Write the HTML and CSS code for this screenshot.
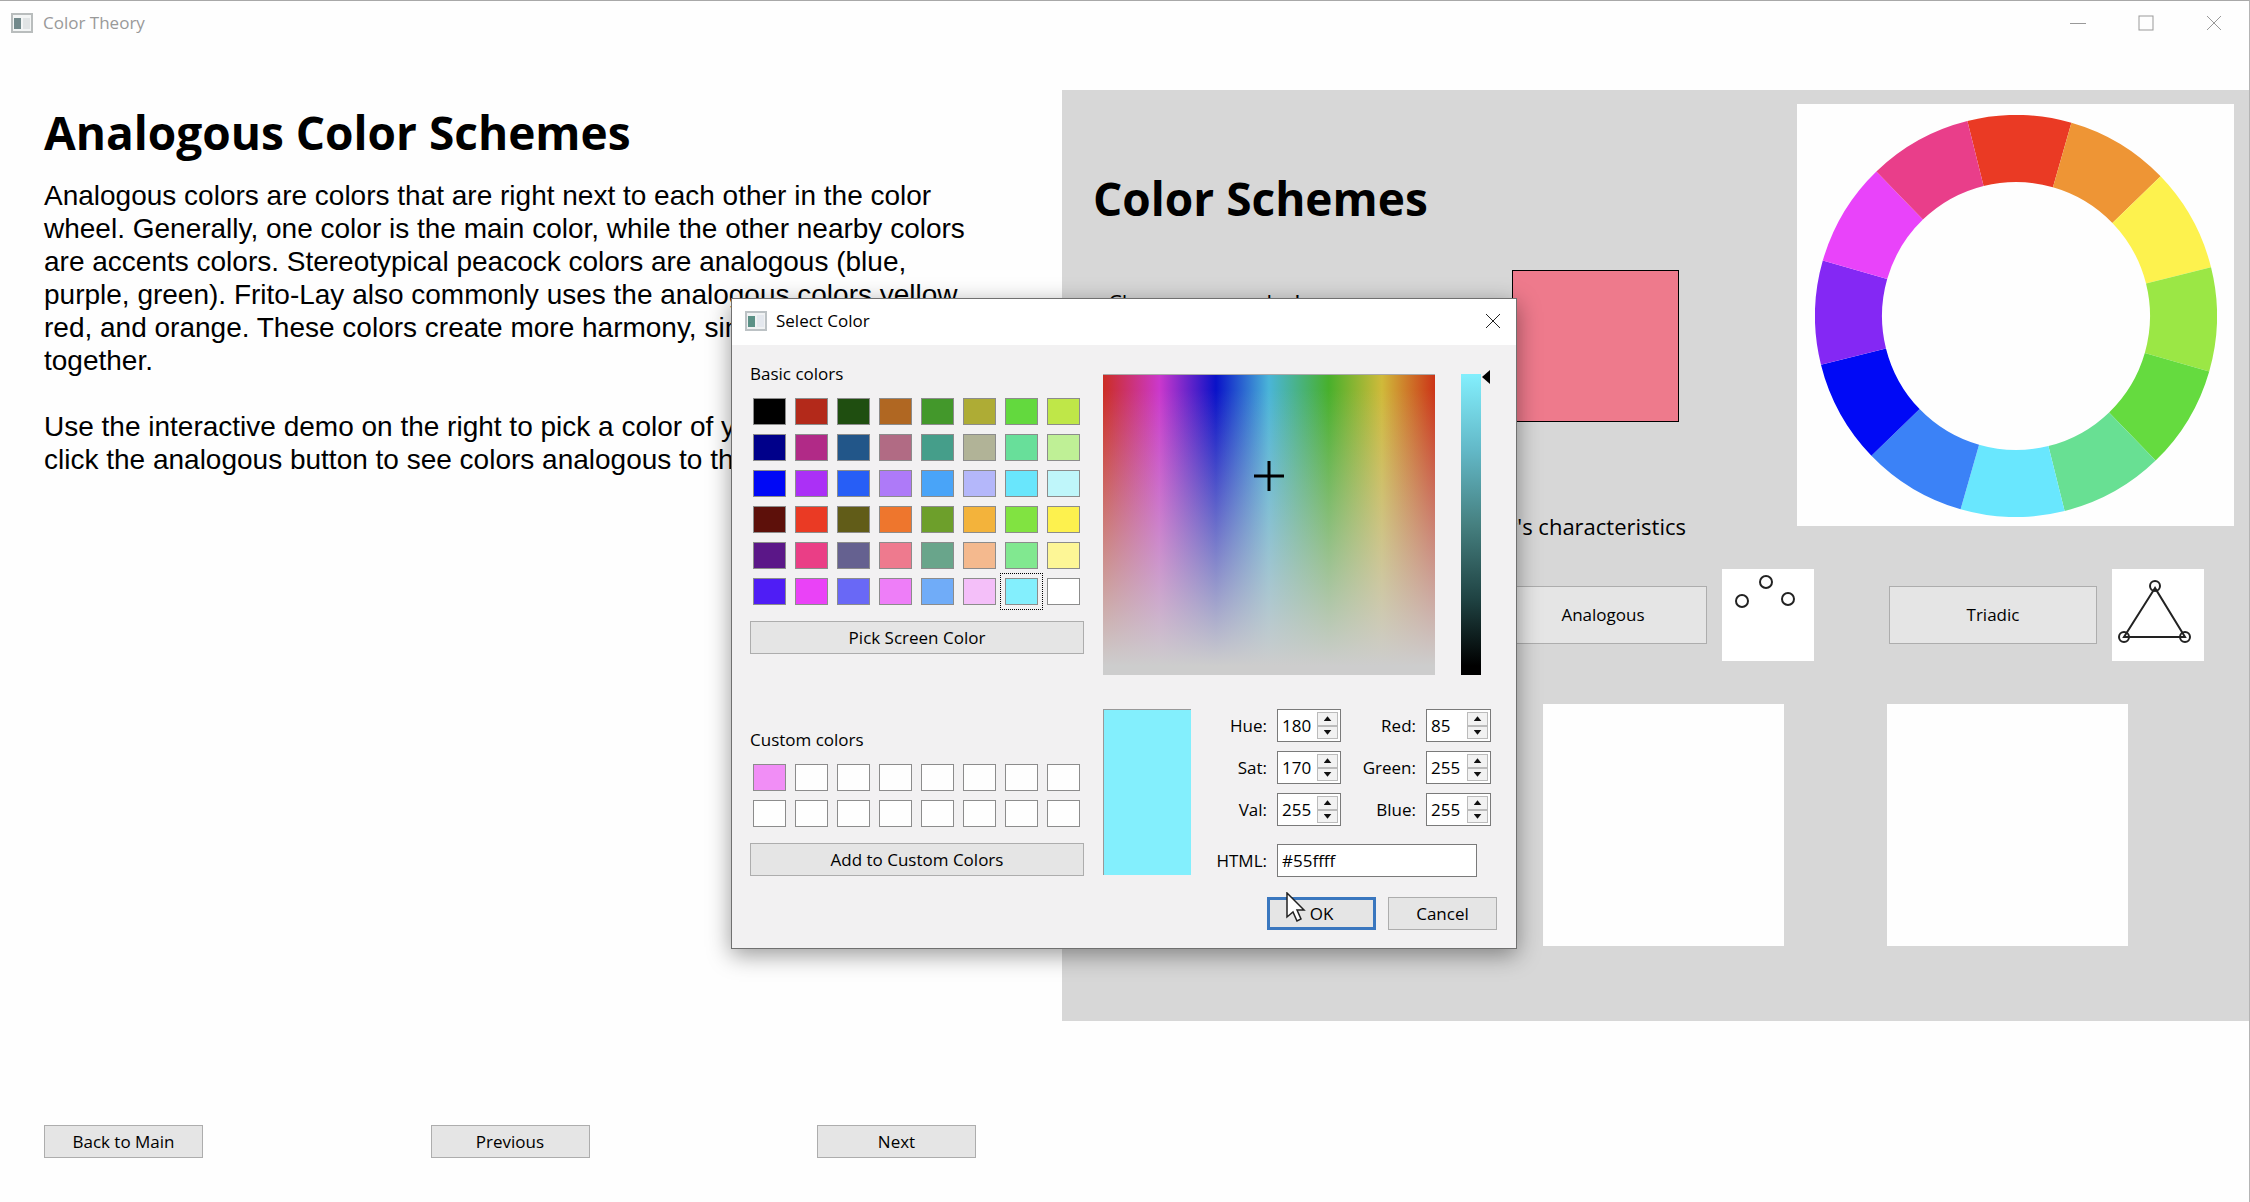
FILE: index.html
```html
<!DOCTYPE html>
<html lang="en">
<head>
<meta charset="utf-8">
<title>Color Theory</title>
<link rel="stylesheet" href="styles.css">
</head>
<body>
<div class="window">
  <header class="titlebar">
    <svg class="app-icon" viewBox="0 0 22 20"><rect x="1" y="1" width="20" height="18" fill="#f3f5f5" stroke="#b9bdbd" stroke-width="2"/><rect x="3" y="5" width="7" height="11" fill="#72898b"/><rect x="12" y="5" width="7" height="11" fill="#e1e4e5"/></svg>
    <span class="titlebar-text">Color Theory</span>
    <div class="window-controls">
      <button type="button" aria-label="Minimize"><svg viewBox="0 0 16 16"><path d="M0 8.500H16"/></svg></button>
      <button type="button" aria-label="Maximize"><svg viewBox="0 0 16 16"><rect x="1" y="1" width="14" height="14"/></svg></button>
      <button type="button" aria-label="Close"><svg viewBox="0 0 16 16"><path d="M1 1L15 15M15 1L1 15"/></svg></button>
    </div>
  </header>

  <main class="content">
    <section class="lesson">
      <div>
        <h1>Analogous Color Schemes</h1>
        <p>Analogous colors are colors that are right next to each other in the color wheel. Generally, one color is the main color, while the other nearby colors are accents colors. Stereotypical peacock colors are analogous (blue, purple, green). Frito-Lay also commonly uses the analogous colors yellow, red, and orange. These colors create more harmony, since they are close together.</p>
        <p>Use the interactive demo on the right to pick a color of your choice. Then click the analogous button to see colors analogous to that color.</p>
      </div>
      <nav class="lesson-nav">
        <button type="button" class="btn">Back to Main</button>
        <button type="button" class="btn">Previous</button>
        <button type="button" class="btn">Next</button>
      </nav>
    </section>

    <section class="demo">
      <div class="demo-top">
        <div class="demo-intro">
          <h2>Color Schemes</h2>
          <div class="choose-row">
            <span class="choose-label">Choose your color!</span>
            <button type="button" class="chosen-color" aria-label="Chosen color"></button>
          </div>
          <p class="characteristics">Pick your color's characteristics</p>
        </div>
        <div class="wheel-card">
          <svg class="wheel" viewBox="-201 -201 402 402" role="img" aria-label="Color wheel">
            <g fill="none" stroke-width="67" transform="rotate(-14)">
              <path stroke="#ea3a24" d="M0-167.500A167.500 167.500 0 0 1 83.750-145.060"/>
              <path stroke="#ee9535" transform="rotate(30)" d="M0-167.500A167.500 167.500 0 0 1 83.750-145.060"/>
              <path stroke="#fdf24e" transform="rotate(60)" d="M0-167.500A167.500 167.500 0 0 1 83.750-145.060"/>
              <path stroke="#9be745" transform="rotate(90)" d="M0-167.500A167.500 167.500 0 0 1 83.750-145.060"/>
              <path stroke="#65db3f" transform="rotate(120)" d="M0-167.500A167.500 167.500 0 0 1 83.750-145.060"/>
              <path stroke="#68e093" transform="rotate(150)" d="M0-167.500A167.500 167.500 0 0 1 83.750-145.060"/>
              <path stroke="#69e7fe" transform="rotate(180)" d="M0-167.500A167.500 167.500 0 0 1 83.750-145.060"/>
              <path stroke="#3b82f7" transform="rotate(210)" d="M0-167.500A167.500 167.500 0 0 1 83.750-145.060"/>
              <path stroke="#0009f6" transform="rotate(240)" d="M0-167.500A167.500 167.500 0 0 1 83.750-145.060"/>
              <path stroke="#8428f4" transform="rotate(270)" d="M0-167.500A167.500 167.500 0 0 1 83.750-145.060"/>
              <path stroke="#e943fa" transform="rotate(300)" d="M0-167.500A167.500 167.500 0 0 1 83.750-145.060"/>
              <path stroke="#e93e8a" transform="rotate(330)" d="M0-167.500A167.500 167.500 0 0 1 83.750-145.060"/>
            </g>
          </svg>
        </div>
      </div>

      <div class="schemes">
        <div class="scheme">
          <button type="button" class="btn btn-scheme">Analogous</button>
          <svg class="scheme-icon" viewBox="0 0 92 92"><g fill="none" stroke="#222" stroke-width="2"><circle cx="44" cy="13" r="6"/><circle cx="20" cy="32" r="6"/><circle cx="66" cy="30" r="6"/></g></svg>
        </div>
        <div class="scheme">
          <button type="button" class="btn btn-scheme">Triadic</button>
          <svg class="scheme-icon" viewBox="0 0 92 92"><g fill="none" stroke="#222" stroke-width="2"><circle cx="43" cy="17" r="5"/><circle cx="12" cy="68" r="5"/><circle cx="73" cy="68" r="5"/><path d="M43 19L12 68H73Z"/></g></svg>
        </div>
      </div>

      <div class="results">
        <div class="result"></div>
        <div class="result"></div>
      </div>
    </section>
  </main>

  <div class="dialog" role="dialog" aria-labelledby="dialog-title">
    <div class="dialog-bar">
      <svg class="app-icon" viewBox="0 0 22 20"><rect x="1" y="1" width="20" height="18" fill="#f0f2f3" stroke="#bcc2c5" stroke-width="2"/><rect x="3" y="5" width="7" height="11" fill="#5b9186"/><rect x="12" y="4" width="7" height="12" fill="#e4e8ee"/></svg>
      <span id="dialog-title">Select Color</span>
      <button type="button" class="dialog-close" aria-label="Close"><svg viewBox="0 0 16 16"><path d="M1 1L15 15M15 1L1 15"/></svg></button>
    </div>
    <form class="dialog-body">
      <div class="palette">
        <h3>Basic colors</h3>
        <div class="swatches">
          <button type="button" aria-label="Color 1" style="background:#000000"></button>
          <button type="button" aria-label="Color 2" style="background:#b3291a"></button>
          <button type="button" aria-label="Color 3" style="background:#1f4e10"></button>
          <button type="button" aria-label="Color 4" style="background:#b06722"></button>
          <button type="button" aria-label="Color 5" style="background:#43982b"></button>
          <button type="button" aria-label="Color 6" style="background:#aeac35"></button>
          <button type="button" aria-label="Color 7" style="background:#63d93e"></button>
          <button type="button" aria-label="Color 8" style="background:#bfe748"></button>
          <button type="button" aria-label="Color 9" style="background:#00008a"></button>
          <button type="button" aria-label="Color 10" style="background:#b12a87"></button>
          <button type="button" aria-label="Color 11" style="background:#225689"></button>
          <button type="button" aria-label="Color 12" style="background:#b16b84"></button>
          <button type="button" aria-label="Color 13" style="background:#459e8a"></button>
          <button type="button" aria-label="Color 14" style="background:#b1b397"></button>
          <button type="button" aria-label="Color 15" style="background:#68df9a"></button>
          <button type="button" aria-label="Color 16" style="background:#bff096"></button>
          <button type="button" aria-label="Color 17" style="background:#0008f6"></button>
          <button type="button" aria-label="Color 18" style="background:#ab30f6"></button>
          <button type="button" aria-label="Color 19" style="background:#275ef6"></button>
          <button type="button" aria-label="Color 20" style="background:#ae7af8"></button>
          <button type="button" aria-label="Color 21" style="background:#49a4f8"></button>
          <button type="button" aria-label="Color 22" style="background:#b4b7fa"></button>
          <button type="button" aria-label="Color 23" style="background:#69e6fc"></button>
          <button type="button" aria-label="Color 24" style="background:#bff6fa"></button>
          <button type="button" aria-label="Color 25" style="background:#5d100a"></button>
          <button type="button" aria-label="Color 26" style="background:#ea3a24"></button>
          <button type="button" aria-label="Color 27" style="background:#615c18"></button>
          <button type="button" aria-label="Color 28" style="background:#ee762d"></button>
          <button type="button" aria-label="Color 29" style="background:#6d9f2b"></button>
          <button type="button" aria-label="Color 30" style="background:#f3b33b"></button>
          <button type="button" aria-label="Color 31" style="background:#81e341"></button>
          <button type="button" aria-label="Color 32" style="background:#fdf14e"></button>
          <button type="button" aria-label="Color 33" style="background:#5b1788"></button>
          <button type="button" aria-label="Color 34" style="background:#ea3e86"></button>
          <button type="button" aria-label="Color 35" style="background:#656190"></button>
          <button type="button" aria-label="Color 36" style="background:#ee7a8e"></button>
          <button type="button" aria-label="Color 37" style="background:#69a58b"></button>
          <button type="button" aria-label="Color 38" style="background:#f4b98e"></button>
          <button type="button" aria-label="Color 39" style="background:#81e890"></button>
          <button type="button" aria-label="Color 40" style="background:#fdf696"></button>
          <button type="button" aria-label="Color 41" style="background:#4f1df5"></button>
          <button type="button" aria-label="Color 42" style="background:#ea42f7"></button>
          <button type="button" aria-label="Color 43" style="background:#6968f6"></button>
          <button type="button" aria-label="Color 44" style="background:#ee7ef8"></button>
          <button type="button" aria-label="Color 45" style="background:#70acf8"></button>
          <button type="button" aria-label="Color 46" style="background:#f4bff9"></button>
          <button type="button" aria-label="Color 47" class="selected" style="background:#83effd"></button>
          <button type="button" aria-label="Color 48" style="background:#ffffff"></button>
        </div>
        <button type="button" class="btn">Pick Screen Color</button>
        <h3 class="custom-title">Custom colors</h3>
        <div class="swatches">
          <button type="button" aria-label="Custom 1" style="background:#f18ef6"></button>
          <button type="button" aria-label="Custom 2"></button>
          <button type="button" aria-label="Custom 3"></button>
          <button type="button" aria-label="Custom 4"></button>
          <button type="button" aria-label="Custom 5"></button>
          <button type="button" aria-label="Custom 6"></button>
          <button type="button" aria-label="Custom 7"></button>
          <button type="button" aria-label="Custom 8"></button>
          <button type="button" aria-label="Custom 9"></button>
          <button type="button" aria-label="Custom 10"></button>
          <button type="button" aria-label="Custom 11"></button>
          <button type="button" aria-label="Custom 12"></button>
          <button type="button" aria-label="Custom 13"></button>
          <button type="button" aria-label="Custom 14"></button>
          <button type="button" aria-label="Custom 15"></button>
          <button type="button" aria-label="Custom 16"></button>
        </div>
        <button type="button" class="btn">Add to Custom Colors</button>
      </div>

      <div class="picker">
        <div class="picker-top">
          <div class="spectrum"><svg class="crosshair" viewBox="0 0 30 30"><path d="M15 0V30M0 15H30" stroke="#000" stroke-width="3"/></svg></div>
          <div class="value-bar"></div>
          <svg class="value-arrow" viewBox="0 0 8 14"><path d="M8 0V14L0 7Z"/></svg>
        </div>
        <div class="picker-values">
          <div class="preview"></div>
          <div class="fields">
            <label for="hue">Hue:</label>
            <div class="spin"><input id="hue" type="number" value="180"><span class="spin-buttons"><button type="button" aria-label="Increase hue"></button><button type="button" class="down" aria-label="Decrease hue"></button></span></div>
            <label for="red">Red:</label>
            <div class="spin"><input id="red" type="number" value="85"><span class="spin-buttons"><button type="button" aria-label="Increase red"></button><button type="button" class="down" aria-label="Decrease red"></button></span></div>
            <label for="sat">Sat:</label>
            <div class="spin"><input id="sat" type="number" value="170"><span class="spin-buttons"><button type="button" aria-label="Increase saturation"></button><button type="button" class="down" aria-label="Decrease saturation"></button></span></div>
            <label for="green">Green:</label>
            <div class="spin"><input id="green" type="number" value="255"><span class="spin-buttons"><button type="button" aria-label="Increase green"></button><button type="button" class="down" aria-label="Decrease green"></button></span></div>
            <label for="val">Val:</label>
            <div class="spin"><input id="val" type="number" value="255"><span class="spin-buttons"><button type="button" aria-label="Increase value"></button><button type="button" class="down" aria-label="Decrease value"></button></span></div>
            <label for="blue">Blue:</label>
            <div class="spin"><input id="blue" type="number" value="255"><span class="spin-buttons"><button type="button" aria-label="Increase blue"></button><button type="button" class="down" aria-label="Decrease blue"></button></span></div>
            <label for="html" class="html-label">HTML:</label>
            <input id="html" class="html-input" type="text" value="#55ffff">
          </div>
        </div>
        <div class="actions">
          <button type="button" class="btn btn-default">OK<svg class="pointer" viewBox="0 0 20 30"><path d="M1 1V25L7 20L11 29L15 27L11 18H18Z" fill="#fff" stroke="#222" stroke-width="1.500"/></svg></button>
          <button type="button" class="btn">Cancel</button>
        </div>
      </div>
    </form>
  </div>
</div>
</body>
</html>
```
FILE: styles.css
```css
* { box-sizing: border-box; }

body {
  margin: 0;
  background: #fefefe;
  color: #000;
  font-family: "Open Sans", "Noto Sans", sans-serif;
  font-size: 17px;
  line-height: 24px;
}

button, input { font: inherit; color: inherit; }
h1, h2, h3, p { margin: 0; }
svg { display: block; }

.window {
  position: relative;
  display: flex;
  flex-direction: column;
  min-height: 100vh;
  border-top: 1px solid #a8a8a8;
  border-right: 1px solid #b4b4b4;
}

.titlebar {
  display: flex;
  align-items: center;
  gap: 10px;
  height: 44px;
  padding: 0 0 0 11px;
  color: #999;
}

.app-icon { width: 22px; height: 20px; flex: none; }

.window-controls { display: flex; margin-left: auto; padding-right: 1px; }
.window-controls button {
  display: grid;
  place-items: center;
  width: 68px;
  height: 44px;
  padding: 0;
  border: 0;
  background: none;
}
.window-controls svg, .dialog-close svg {
  width: 16px;
  height: 16px;
  fill: none;
  stroke: #999;
  stroke-width: 1;
}

.content {
  flex: 1;
  display: grid;
  grid-template-columns: 1062fr 1187fr;
  align-items: start;
  padding-top: 45px;
}

.lesson {
  align-self: stretch;
  display: flex;
  flex-direction: column;
  justify-content: space-between;
  padding: 10px 86px 44px 44px;
}

h1, h2 { font-size: 46px; line-height: 64px; font-weight: 700; }

.lesson p {
  margin: 15px 0 33px;
  font-family: "Liberation Sans", Arial, sans-serif;
  font-size: 28px;
  line-height: 33px;
}

.lesson p + p { margin: 0; }

.lesson-nav { display: flex; justify-content: space-between; }
.lesson-nav .btn { width: 159px; }

.btn {
  height: 33px;
  padding: 0;
  border: 1px solid #adadad;
  background: #e5e5e5;
}

.demo {
  padding: 14px 15px 75px 31px;
  background: #d7d7d7;
}

.demo-top { display: flex; height: 465px; }
.demo-intro { flex: 1; padding-top: 62px; }
.choose-row {
  display: flex;
  justify-content: space-between;
  padding: 40px 118px 0 15px;
}
.choose-label, .characteristics { font-size: 22px; line-height: 32px; }
.choose-label { padding-top: 16px; }
.chosen-color {
  width: 167px;
  height: 152px;
  padding: 0;
  border: 1px solid #000;
  background: #ee7a8c;
}
.characteristics { padding: 88px 111px 0 0; text-align: right; }

.wheel-card {
  display: flex;
  justify-content: center;
  width: 437px;
  height: 422px;
  padding-top: 11px;
  background: #fefefe;
}
.wheel { width: 402px; height: 402px; }

.schemes { display: flex; justify-content: flex-end; gap: 75px; padding-right: 30px; }
.scheme { display: flex; align-items: center; gap: 15px; }
.btn-scheme { width: 208px; height: 58px; }
.scheme-icon { width: 92px; height: 92px; background: #fff; }

.results { display: flex; justify-content: flex-end; gap: 103px; padding: 43px 106px 0 0; }
.result { width: 241px; height: 242px; background: #fefefe; }

.dialog {
  position: absolute;
  left: 731px;
  top: 297px;
  width: 786px;
  border: 1px solid #707070;
  background: #f2f1f2;
  box-shadow: 0 6px 22px rgba(0, 0, 0, 0.4);
}

.dialog-bar {
  display: flex;
  align-items: center;
  gap: 9px;
  height: 46px;
  padding: 0 15px 2px 13px;
  background: #fff;
}
.dialog-close { margin-left: auto; padding: 0; border: 0; background: none; }
.dialog-close svg { stroke: #222; }

.dialog-body { display: flex; gap: 19px; padding: 17px 19px 18px 18px; }

.palette { width: 334px; display: flex; flex-direction: column; }
h3 { font-size: 17px; line-height: 24px; font-weight: 400; }

.swatches {
  display: grid;
  grid-template-columns: repeat(8, 33px);
  gap: 9px;
  padding: 12px 3px 16px;
}
.swatches button {
  height: 27px;
  padding: 0;
  border: 1px solid #8c8c8c;
  background: #fefefe;
}
.swatches .selected { outline: 1px dotted #000; outline-offset: 4px; }
.custom-title { margin-top: 74px; }

.picker { flex: 1; display: flex; flex-direction: column; }
.picker-top { display: flex; padding-top: 12px; }
.spectrum {
  display: grid;
  place-items: start center;
  width: 332px;
  height: 301px;
  padding-top: 86px;
  border-top: 1px solid #aaa;
  background:
    linear-gradient(to bottom, transparent 0 5%, #cdcdcd 97%),
    linear-gradient(to right, #cc2e24, #cb38cc 17%, #0a12c8 34%, #4ab5d8 50%, #48b02c 68%, #d0ba3a 84%, #cc3418);
}
.crosshair { width: 30px; height: 30px; }
.value-bar {
  width: 20px;
  height: 301px;
  margin-left: 26px;
  background: linear-gradient(to bottom, #83effd, #63b9c8 25%, #468080 50%, #1f4242 75%, #000 97%);
}
.value-arrow { width: 8px; height: 14px; margin: -4px 0 0 1px; }

.picker-values { display: flex; gap: 22px; padding-top: 34px; }
.preview {
  width: 88px;
  height: 166px;
  border-top: 1px solid #999;
  border-left: 1px solid #999;
  background: #83effd;
}
.fields {
  display: grid;
  grid-template-columns: 54px 64px 65px 65px;
  grid-template-rows: 33px 33px 33px 33px;
  column-gap: 10px;
  row-gap: 9px;
  align-items: center;
}
.fields label { text-align: right; }
.spin, .html-input {
  height: 33px;
  border: 1px solid #7a7a7a;
  background: #fff;
}
.spin { display: flex; padding: 2px; }
.spin input {
  flex: 1;
  min-width: 0;
  padding: 0 0 0 2px;
  border: 0;
  background: none;
  appearance: textfield;
}
.spin input::-webkit-inner-spin-button { appearance: none; display: none; }
.spin-buttons { display: flex; flex-direction: column; width: 21px; }
.spin-buttons button {
  flex: 1;
  display: grid;
  place-items: center;
  padding: 0;
  border: 1px solid #bbb;
  background: #f2f2f2;
}
.spin-buttons button::before {
  content: "";
  width: 8px;
  height: 5px;
  background: #111;
  clip-path: polygon(50% 0, 100% 100%, 0 100%);
}
.spin-buttons .down::before { clip-path: polygon(0 0, 100% 0, 50% 100%); }

.html-label, .html-input { margin-top: 18px; }
.html-input { grid-column: 2 / 5; width: 200px; padding: 0 4px; }

.actions { display: flex; justify-content: flex-end; gap: 12px; padding-top: 22px; }
.actions .btn { position: relative; width: 109px; }
.actions .btn-default { border: 3px solid #3a77bf; }
.pointer { position: absolute; left: 16px; top: -8px; width: 20px; height: 30px; }
```
